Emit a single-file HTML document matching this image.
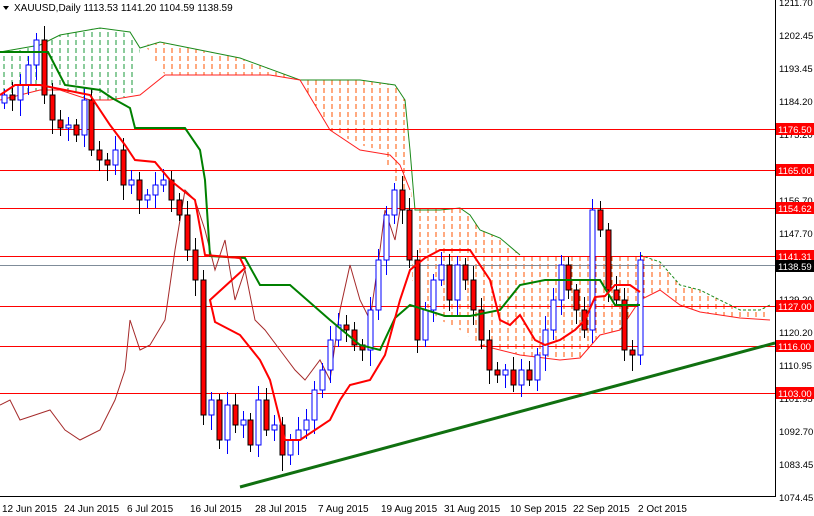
<!DOCTYPE html>
<html><head><meta charset="utf-8"><style>
body{margin:0;background:#fff;width:814px;height:516px;overflow:hidden;font-family:"Liberation Sans",sans-serif}
svg{position:absolute;left:0;top:0}
text{font-family:"Liberation Sans",sans-serif;font-size:10px;fill:#000}
.a{font-size:9.5px}
</style></head><body>
<svg id="s" width="814" height="516" xmlns="http://www.w3.org/2000/svg">
<defs>
<pattern id="ho" width="8" height="8" patternUnits="userSpaceOnUse"><line x1="4" y1="0" x2="4" y2="5" stroke="#ff5500" stroke-width="1"/></pattern>
<pattern id="hg" width="8" height="8" patternUnits="userSpaceOnUse"><line x1="4" y1="0" x2="4" y2="5" stroke="#1a9a3a" stroke-width="1"/></pattern>
</defs>
<rect x="0" y="0" width="814" height="516" fill="#fff"/>
<polygon fill="url(#hg)" points="0,52 20,50 40,45 60,35 80,30 100,28 120,30 135,40 140,50 135,95 110,100 90,100 60,90 40,90 20,95 0,100"/>
<polygon fill="url(#ho)" points="145,45 160,42 200,50 240,58 300,80 360,80 395,85 405,100 410,150 412,200 400,190 380,150 360,145 330,130 300,80 270,75 165,75"/>
<polygon fill="url(#ho)" points="412,208 460,208 470,215 480,230 500,238 520,255 640,255 640,300 620,330 600,335 580,358 560,360 520,355 500,350 480,345 460,330 440,320 420,300 412,280"/>
<polygon fill="url(#ho)" points="640,255 660,262 680,285 700,290 720,300 740,310 760,310 770,305 770,320 740,318 700,312 680,305 660,290 640,300"/>
<polyline fill="none" stroke="#1a8a1a" stroke-width="1" points="0,52 40,45 60,35 100,28 130,32 140,48 150,45 160,42 200,50 240,58 300,80 360,80 395,85 405,100 410,150 415,210 440,210 460,208 470,215 480,230 500,238 520,255"/>
<polyline fill="none" stroke="#ff2020" stroke-width="1" points="0,100 40,90 60,90 90,100 110,100 140,95 165,75 270,75 300,80 330,130 360,150 390,155 400,165 410,190"/>
<polyline fill="none" stroke="#ff2020" stroke-width="1" points="480,345 500,350 520,355 560,360 580,358 600,335 620,330 640,300 660,290 680,305 700,312 740,318 770,320"/>
<polyline fill="none" stroke="#1a8a1a" stroke-width="1" stroke-dasharray="3,2" points="640,255 660,262 680,285 700,290 720,300 740,310 760,310 770,305"/>
<g stroke="#ff0000" stroke-width="1">
<line x1="0" y1="129.5" x2="775" y2="129.5"/><line x1="0" y1="170.5" x2="775" y2="170.5"/>
<line x1="0" y1="208.5" x2="775" y2="208.5"/><line x1="0" y1="256.5" x2="775" y2="256.5"/>
<line x1="0" y1="306.5" x2="775" y2="306.5"/><line x1="0" y1="346.5" x2="775" y2="346.5"/>
<line x1="0" y1="393.5" x2="775" y2="393.5"/>
</g>
<line x1="0" y1="265.5" x2="775" y2="265.5" stroke="#7f8c99"/>
<polyline fill="none" stroke="#a52a2a" stroke-width="1" points="0,405 10,400 20,420 35,415 50,410 65,430 80,440 100,430 115,400 125,370 130,320 140,350 150,345 165,320 175,250 185,190 195,200 205,230 215,270 225,240 235,300 245,270 255,320 265,330 280,350 295,370 305,380 320,360 330,380 340,310 350,265 360,300 370,320 380,250 385,210 395,240 400,210 405,200"/>
<g id="c"></g>
<polyline fill="none" stroke="#008000" stroke-width="2" points="0,52 48,52 65,85 100,90 112,98 130,108 135,128 185,128 200,150 205,180 210,256 245,258 260,285 290,285 330,320 360,345 380,350 395,318 410,305 445,316 470,316 500,310 520,285 545,280 600,280 615,305 640,305"/>
<polyline fill="none" stroke="#ff0000" stroke-width="2" points="0,95 15,85 40,85 90,95 110,125 125,145 135,160 155,162 170,180 195,200 205,255 240,258 245,268 210,300 215,322 240,335 260,360 270,380 285,440 300,440 330,420 340,400 350,385 370,380 385,355 400,300 410,270 425,258 440,250 470,250 490,280 500,320 510,325 520,315 535,340 545,345 560,340 575,330 585,320 595,297 605,296 615,285 630,285 640,292"/>
<line x1="240" y1="487" x2="775" y2="343" stroke="#107010" stroke-width="3"/>
<rect x="775" y="0" width="39" height="516" fill="#fff"/>
<line x1="775.5" y1="0" x2="775.5" y2="497" stroke="#000"/>
<line x1="0" y1="496.5" x2="776" y2="496.5" stroke="#000"/>
<g class="a">
<text class="a" x="779" y="6">1211.70</text><text class="a" x="779" y="39">1202.45</text><text class="a" x="779" y="72">1193.45</text><text class="a" x="779" y="105">1184.20</text><text class="a" x="779" y="138">1175.20</text><text class="a" x="779" y="204">1156.70</text><text class="a" x="779" y="237">1147.70</text><text class="a" x="779" y="303">1129.20</text><text class="a" x="779" y="336">1120.20</text><text class="a" x="779" y="369">1110.95</text><text class="a" x="779" y="402">1101.95</text><text class="a" x="779" y="435">1092.70</text><text class="a" x="779" y="468">1083.45</text><text class="a" x="779" y="501">1074.45</text>
</g>
<g>
<rect x="776" y="123" width="38" height="12" fill="#ff0000"/><text class="a" x="778" y="133" style="fill:#fff">1176.50</text>
<rect x="776" y="164" width="38" height="12" fill="#ff0000"/><text class="a" x="778" y="174" style="fill:#fff">1165.00</text>
<rect x="776" y="202" width="38" height="12" fill="#ff0000"/><text class="a" x="778" y="212" style="fill:#fff">1154.62</text>
<rect x="776" y="250" width="38" height="12" fill="#ff0000"/><text class="a" x="778" y="260" style="fill:#fff">1141.31</text>
<rect x="776" y="260" width="38" height="12" fill="#000"/><text class="a" x="778" y="270" style="fill:#fff">1138.59</text>
<rect x="776" y="300" width="38" height="12" fill="#ff0000"/><text class="a" x="778" y="310" style="fill:#fff">1127.00</text>
<rect x="776" y="340" width="38" height="12" fill="#ff0000"/><text class="a" x="778" y="350" style="fill:#fff">1116.00</text>
<rect x="776" y="387" width="38" height="12" fill="#ff0000"/><text class="a" x="778" y="397" style="fill:#fff">1103.00</text>
</g>
<g>
<text x="2" y="512">12 Jun 2015</text><text x="64" y="512">24 Jun 2015</text><text x="127" y="512">6 Jul 2015</text><text x="190" y="512">16 Jul 2015</text><text x="255" y="512">28 Jul 2015</text><text x="318" y="512">7 Aug 2015</text><text x="381" y="512">19 Aug 2015</text><text x="444" y="512">31 Aug 2015</text><text x="510" y="512">10 Sep 2015</text><text x="573" y="512">22 Sep 2015</text><text x="638" y="512">2 Oct 2015</text>
</g>
<polygon points="3,6 9,6 6,10" fill="#000"/>
<text x="14" y="11">XAUUSD,Daily  1113.53 1141.20 1104.59 1138.59</text>
</svg>
<script>
var C=[95,100,85,65,40,95,120,128,125,135,100,150,160,165,150,185,180,200,195,185,180,200,215,250,
280,415,400,440,405,425,420,445,400,430,425,455,440,430,420,390,370,340,325,330,345,350,310,260,215,190,210,260,340,310,280,265,300,265,280,310,340,370,375,370,385,370,380,355,330,300,265,290,310,330,210,230,290,300,350,355,260];
var g=document.getElementById('c'),n=C.length,st=7.95,h='';
var o=C[0]+8;
for(var i=0;i<n;i++){var x=Math.round(4+i*st)+0.5,c=C[i],t=Math.min(o,c),b=Math.max(o,c);if(b-t<2)b=t+2;
var up=c<o,wt=t-6-(i*7%9),wb=b+6+(i*5%11);
h+='<line x1="'+x+'" y1="'+wt+'" x2="'+x+'" y2="'+wb+'" stroke="'+(up?'#0000ff':'#000')+'"/>';
h+='<rect x="'+(x-2.5)+'" y="'+t+'" width="5" height="'+(b-t)+'" fill="'+(up?'#fff':'#ff0000')+'" stroke="'+(up?'#0000ff':'#000')+'"/>';
o=c;}
g.innerHTML=h;
</script>
</body></html>
